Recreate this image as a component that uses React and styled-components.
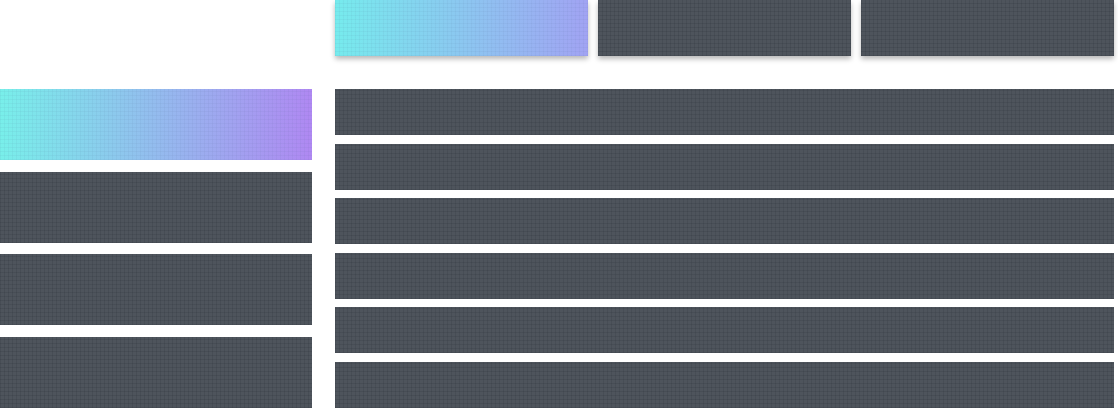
import React from "react";
import styled, { createGlobalStyle, css } from "styled-components";

const Global = createGlobalStyle`
  html, body { margin: 0; padding: 0; background: #ffffff; }
  body { font-family: "Liberation Sans", Arial, sans-serif; overflow: hidden; }
`;

const texture = css`
  background-image:
    repeating-linear-gradient(90deg, ${(p) => (p.$active ? "rgba(60, 80, 120, 0.05)" : "rgba(30, 36, 44, 0.14)")} 0 1px, transparent 1px 4px),
    repeating-linear-gradient(0deg, ${(p) => (p.$active ? "rgba(60, 80, 120, 0.05)" : "rgba(30, 36, 44, 0.14)")} 0 1px, transparent 1px 4px),
    ${(p) =>
      p.$active
        ? `linear-gradient(90deg, ${p.$from} 0%, ${p.$to} 100%)`
        : "linear-gradient(#4e545c, #4e545c)"};
`;

const Page = styled.div`
  width: 1118px;
  height: 409px;
  display: flex;
  flex-direction: column;
  overflow: hidden;
`;

const TabBar = styled.div`
  display: flex;
  gap: 10px;
  padding-left: 335px;
  height: 56px;
`;

const Tab = styled.div`
  width: 253px;
  height: 56px;
  box-shadow: 0 3px 5px rgba(0, 0, 0, 0.28);
  ${texture}
`;

const Body = styled.div`
  display: grid;
  grid-template-columns: 312px 779px;
  column-gap: 23px;
  margin-top: 33px;
  height: 319px;
`;

const Side = styled.div`
  display: flex;
  flex-direction: column;
  justify-content: space-between;
`;

const SideItem = styled.div`
  height: 71px;
  ${texture}
`;

const List = styled.div`
  display: flex;
  flex-direction: column;
  justify-content: space-between;
`;

const Row = styled.div`
  height: 46px;
  ${texture}
`;

export default function App() {
  const tabs = [0, 1, 2];
  const side = [0, 1, 2, 3];
  const rows = [0, 1, 2, 3, 4, 5];
  return (
    <Page>
      <Global />
      <TabBar>
        {tabs.map((t) => (
          <Tab key={t} $active={t === 0} $from="#76ebed" $to="#a1a3f3" />
        ))}
      </TabBar>
      <Body>
        <Side>
          {side.map((s) => (
            <SideItem key={s} $active={s === 0} $from="#78efea" $to="#af88f2" />
          ))}
        </Side>
        <List>
          {rows.map((r) => (
            <Row key={r} />
          ))}
        </List>
      </Body>
    </Page>
  );
}
